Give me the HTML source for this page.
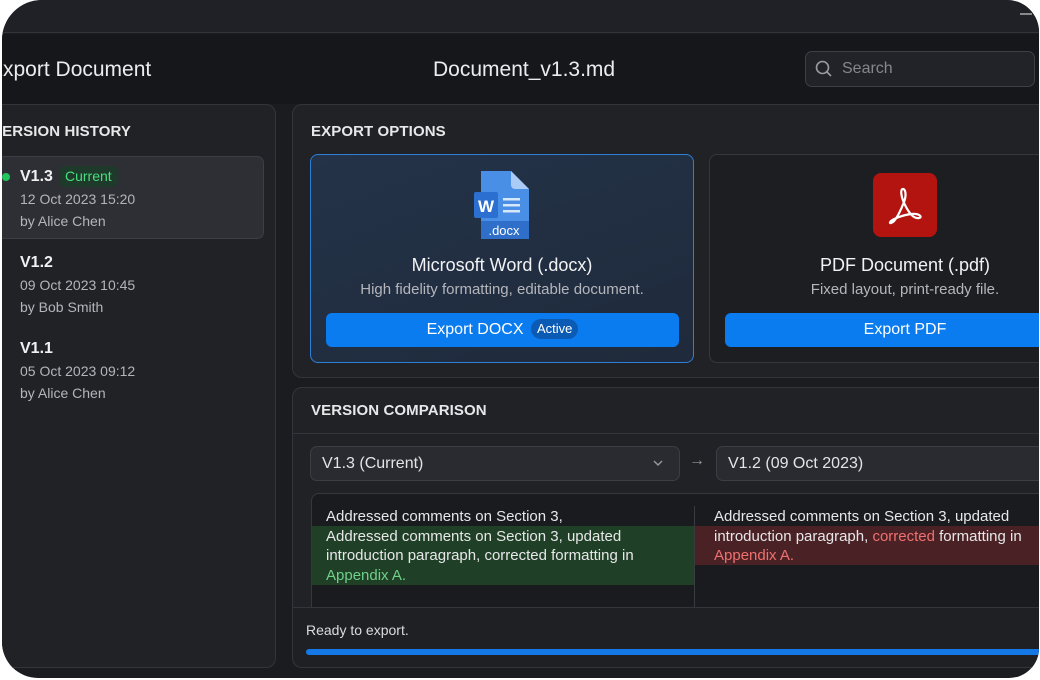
<!DOCTYPE html>
<html><head><meta charset="utf-8"><style>
*{box-sizing:border-box;margin:0;padding:0}
body{width:1040px;height:680px;background:#fff;overflow:hidden;font-family:"Liberation Sans",sans-serif;position:relative}
.abs{position:absolute}
#win{position:absolute;left:2px;top:0;width:1037px;height:678px;background:#1b1c20;border-radius:40px 32px 30px 36px;overflow:hidden}
.t{position:absolute;white-space:nowrap}
.panel{position:absolute;background:#212226;border:1px solid #34353b;border-radius:10px}
.h{font-size:15px;color:#e8e8ea;font-weight:bold;letter-spacing:.1px}
.sm{font-size:14px;color:#b4b5ba}
.btn{position:absolute;background:#0a7cf0;border-radius:6px;color:#fff;font-size:16px;text-align:center;line-height:34px;height:34px}
.dd{position:absolute;background:#2a2b30;border:1px solid #3d3e44;border-radius:7px;height:35px;color:#e4e4e6;font-size:16px;line-height:33px;padding-left:11px}
.d{font-size:15px;color:#e7e7e9;line-height:19.5px}
</style></head><body>
<div id="win">
 <div class="abs" style="left:0;top:0;width:1060px;height:33px;background:#202126;border-bottom:1px solid #34353a"></div>
 <div class="abs" style="left:1018px;top:13px;width:12px;height:2px;background:#888"></div>
 <div class="abs" style="left:0;top:34px;width:1060px;height:70px;background:#16171b"></div>
 <div class="t" style="left:-13px;top:58px;font-size:21px;color:#ececee">Export Document</div>
 <div class="t" style="left:431px;top:58px;font-size:21px;color:#ececee">Document_v1.3.md</div>
 <div class="abs" style="left:803px;top:51px;width:230px;height:36px;border:1px solid #3e3f45;border-radius:7px;background:#222328"></div>
 <svg class="abs" style="left:812px;top:59px" width="20" height="20" viewBox="0 0 20 20"><circle cx="8.5" cy="8.5" r="6" fill="none" stroke="#9a9ba0" stroke-width="1.6"/><line x1="13" y1="13" x2="17" y2="17" stroke="#9a9ba0" stroke-width="1.6"/></svg>
 <div class="t" style="left:840px;top:60px;font-size:16px;color:#86878c">Search</div>

 <!-- left panel -->
 <div class="panel" style="left:-20px;top:104px;width:294px;height:564px"></div>
 <div class="t h" style="left:-10px;top:123px">VERSION HISTORY</div>
 <div class="abs" style="left:-10px;top:156px;width:272px;height:83px;background:#2e2f34;border:1px solid #3e3f45;border-radius:7px"></div>
 <div class="abs" style="left:0;top:173px;width:8px;height:8px;border-radius:4px;background:#22c55e"></div>
 <div class="t" style="left:18px;top:168px;font-size:16px;font-weight:bold;color:#f0f0f2">V1.3</div>
 <div class="t" style="left:57px;top:166px;height:21px;padding:0 6px;background:#1d3a2a;border-radius:6px;color:#4ade80;font-size:14px;line-height:21px">Current</div>
 <div class="t sm" style="left:18px;top:191px">12 Oct 2023 15:20</div>
 <div class="t sm" style="left:18px;top:213px">by Alice Chen</div>
 <div class="t" style="left:18px;top:254px;font-size:16px;font-weight:bold;color:#f0f0f2">V1.2</div>
 <div class="t sm" style="left:18px;top:277px">09 Oct 2023 10:45</div>
 <div class="t sm" style="left:18px;top:299px">by Bob Smith</div>
 <div class="t" style="left:18px;top:340px;font-size:16px;font-weight:bold;color:#f0f0f2">V1.1</div>
 <div class="t sm" style="left:18px;top:363px">05 Oct 2023 09:12</div>
 <div class="t sm" style="left:18px;top:385px">by Alice Chen</div>

 <!-- export options -->
 <div class="panel" style="left:290px;top:104px;width:780px;height:274px"></div>
 <div class="t h" style="left:309px;top:123px">EXPORT OPTIONS</div>
 <div class="abs" style="left:308px;top:154px;width:384px;height:209px;background:linear-gradient(160deg,#243349,#1f2a3b);border:1px solid #2f7fd6;border-radius:8px"></div>
 <svg class="abs" style="left:468px;top:170px" width="62" height="70" viewBox="0 0 62 70">
  <path d="M11 1h30l18 18v46a4 4 0 0 1-4 4H15a4 4 0 0 1-4-4z" fill="#4a8fe6"/>
  <path d="M41 1v14a4 4 0 0 0 4 4h14z" fill="#a9cbf5"/>
  <rect x="4" y="22" width="24" height="26" rx="2" fill="#2b6fd0"/>
  <text x="16" y="42" font-family="Liberation Sans" font-weight="bold" font-size="17" fill="#fff" text-anchor="middle">W</text>
  <rect x="33" y="28" width="17" height="2.5" fill="#d8e7fb"/><rect x="33" y="34" width="17" height="2.5" fill="#d8e7fb"/><rect x="33" y="40" width="17" height="2.5" fill="#d8e7fb"/>
  <rect x="11" y="51" width="48" height="18" fill="#2f6fc9"/>
  <text x="34" y="65" font-family="Liberation Sans" font-size="13" fill="#fff" text-anchor="middle">.docx</text>
 </svg>
 <div class="t" style="left:308px;top:255px;width:384px;text-align:center;font-size:18px;color:#f2f2f4">Microsoft Word (.docx)</div>
 <div class="t" style="left:308px;top:281px;width:384px;text-align:center;font-size:15px;color:#b5b6bb">High fidelity formatting, editable document.</div>
 <div class="btn" style="left:324px;top:313px;width:353px">Export DOCX <span style="display:inline-block;background:#0b5bb5;border-radius:10px;font-size:13px;line-height:20px;padding:0 6px;margin-left:3px;vertical-align:1px">Active</span></div>
 <div class="abs" style="left:707px;top:154px;width:360px;height:209px;background:#1d1e22;border:1px solid #36373d;border-radius:8px"></div>
 <div class="abs" style="left:871px;top:173px;width:64px;height:64px;background:#b3140f;border-radius:8px"></div>
 <svg class="abs" style="left:881px;top:183px" width="44" height="44" viewBox="0 0 44 44"><path d="M20 6c-3 0-2 8 2 16s9 14 14 13c4-1 0-5-8-4S10 36 8 38s-1 3 2 1 8-12 11-20 1-13-1-13z" fill="none" stroke="#fff" stroke-width="2.2" stroke-linejoin="round"/></svg>
 <div class="t" style="left:707px;top:255px;width:392px;text-align:center;font-size:18px;color:#f2f2f4">PDF Document (.pdf)</div>
 <div class="t" style="left:707px;top:281px;width:392px;text-align:center;font-size:15px;color:#b5b6bb">Fixed layout, print-ready file.</div>
 <div class="btn" style="left:723px;top:313px;width:360px">Export PDF</div>

 <!-- comparison -->
 <div class="panel" style="left:290px;top:387px;width:780px;height:281px;overflow:hidden">
  <div class="abs" style="left:0;top:45px;width:780px;height:1px;background:#34353b"></div>
 </div>
 <div class="t h" style="left:309px;top:402px">VERSION COMPARISON</div>
 <div class="dd" style="left:308px;top:446px;width:370px">V1.3 (Current)</div>
 <svg class="abs" style="left:650px;top:458px" width="12" height="10"><path d="M2 3l4 4 4-4" fill="none" stroke="#999" stroke-width="1.4"/></svg>
 <div class="t" style="left:687px;top:452px;color:#999;font-size:16px">→</div>
 <div class="dd" style="left:714px;top:446px;width:360px">V1.2 (09 Oct 2023)</div>
 <div class="abs" style="left:309px;top:493px;width:760px;height:140px;background:#1a1b1f;border:1px solid #36373d;border-radius:8px;overflow:hidden">
  <div class="abs" style="left:0;top:32px;width:382px;height:59px;background:#1f4026"></div>
  <div class="abs" style="left:383px;top:32px;width:400px;height:39px;background:#4a2225"></div>
  <div class="abs" style="left:382px;top:12px;width:1px;height:130px;background:#3a3b40"></div>
  <div class="t d" style="left:14px;top:13px">Addressed comments on Section 3,<br>Addressed comments on Section 3, updated<br>introduction paragraph, corrected formatting in<br><span style="color:#6fd08a">Appendix A.</span></div>
  <div class="t d" style="left:402px;top:13px">Addressed comments on Section 3, updated<br>introduction paragraph, <span style="color:#f07070">corrected</span> formatting in<br><span style="color:#f07070">Appendix A.</span></div>
 </div>
 <div class="abs" style="left:291px;top:607px;width:780px;height:60px;background:#1f2024;border-top:1px solid #34353b;border-radius:0 0 10px 10px"></div>
 <div class="t" style="left:304px;top:622px;font-size:14px;color:#dcdce0">Ready to export.</div>
 <div class="abs" style="left:304px;top:649px;width:760px;height:6px;border-radius:3px;background:#1479e6"></div>
</div>
</body></html>
